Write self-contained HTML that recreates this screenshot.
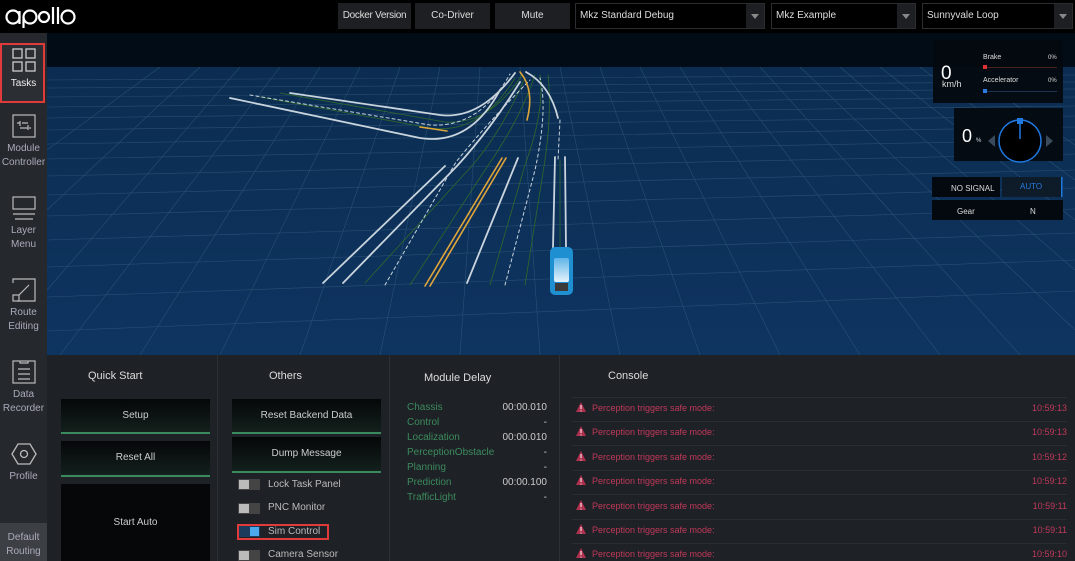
<!DOCTYPE html>
<html><head><meta charset="utf-8"><style>
*{margin:0;padding:0;box-sizing:border-box}
html,body{width:1075px;height:561px;overflow:hidden}
body{background:#1e2126;font-family:"Liberation Sans",sans-serif;position:relative;color:#ddd}
.abs{position:absolute}
#top{left:0;top:0;width:1075px;height:33px;background:#000}
.btn{position:absolute;top:3px;height:26px;background:#1d1f22;color:#ddd;font-size:10px;line-height:26px;text-align:center;white-space:nowrap;overflow:hidden}
.sel{position:absolute;top:3px;height:26px;background:#000;border:1px solid #2b2d30;color:#ddd;font-size:10px;line-height:24px;padding-left:4px;white-space:nowrap}
.sel i{position:absolute;right:0;top:0;width:18px;height:24px;background:#1d1f22}
.sel i:after{content:"";position:absolute;left:5px;top:10px;border:4px solid transparent;border-top:5px solid #888}
#side{left:0;top:33px;width:47px;height:528px;background:#25282c}
.nav{position:absolute;left:0;width:47px;text-align:center;font-size:10px;color:#aab;line-height:14px}
.nav svg{display:block;margin:0 auto 4px}
.panel{position:absolute;top:355px;height:206px;background:#1e2126;border-right:1px solid #2d3035}
.h{position:absolute;font-size:11px;color:#ddd}
.qb{position:absolute;background:linear-gradient(#050708,#13201c);border-bottom:2px solid #3a8a5e;color:#ccc;font-size:10px;text-align:center}
.tg{position:absolute;left:238px;width:22px;height:11px;background:#444}
.tg:before{content:"";position:absolute;left:1px;top:1px;width:10px;height:9px;background:#bbb}
.tl{position:absolute;left:268px;font-size:10px;color:#bbb}
.md{position:absolute;left:407px;width:140px;font-size:10px;color:#3c8b5c}
.md span{position:absolute;right:0;color:#ccc}
.cr{position:absolute;left:572px;width:495px;height:24px;border-bottom:1px solid #2a2d31;font-size:9px;color:#c0395a}
.cr b{font-weight:normal;position:absolute;left:20px;top:5px}
.cr em{font-style:normal;position:absolute;right:0;top:5px}
.cr svg{position:absolute;left:3px;top:3px}
</style></head><body>
<div id="top" class="abs">
<svg class="abs" style="left:5px;top:6px" width="72" height="22"><g fill="none" stroke="#fff" stroke-width="2.2"><circle cx="8" cy="11" r="6.5"/><line x1="14.5" y1="5" x2="14.5" y2="18"/><circle cx="25" cy="11" r="6.5"/><line x1="18.5" y1="11" x2="18.5" y2="22"/><circle cx="39" cy="11" r="5"/><line x1="48" y1="1" x2="48" y2="18"/><line x1="53" y1="1" x2="53" y2="18"/><circle cx="63" cy="11" r="6.5"/></g></svg>
<div class="btn" style="left:338px;width:73px;letter-spacing:-0.3px">Docker Version</div>
<div class="btn" style="left:415px;width:75px">Co-Driver</div>
<div class="btn" style="left:495px;width:75px">Mute</div>
<div class="sel" style="left:575px;width:190px">Mkz Standard Debug<i></i></div>
<div class="sel" style="left:771px;width:145px">Mkz Example<i></i></div>
<div class="sel" style="left:922px;width:151px">Sunnyvale Loop<i></i></div>
</div>
<div id="side" class="abs"></div>
<div class="abs" style="left:0;top:43px;width:45px;height:60px;border:2px solid #e03a3a;background:#2b2e33"></div>
<div class="nav" style="top:47px"><svg width="26" height="26" fill="none" stroke="#ccc" stroke-width="1.3"><rect x="2" y="2" width="9" height="9"/><rect x="15" y="2" width="9" height="9"/><rect x="2" y="15" width="9" height="9"/><rect x="15" y="15" width="9" height="9"/></svg><span style="color:#eee">Tasks</span></div>
<div class="nav" style="top:114px"><svg width="24" height="24" fill="none" stroke="#bbb" stroke-width="1.2"><rect x="1" y="1" width="22" height="22"/><path d="M8 7v5M5 9h3M10 9h6M16 16v-5M8 14h8M17 14h2"/></svg>Module<br>Controller</div>
<div class="nav" style="top:196px"><svg width="24" height="24" fill="none" stroke="#bbb" stroke-width="1.2"><rect x="1" y="1" width="22" height="12"/><path d="M1 18h22M3 23h18"/></svg>Layer<br>Menu</div>
<div class="nav" style="top:278px"><svg width="24" height="24" fill="none" stroke="#bbb" stroke-width="1.2"><path d="M1 5V1h22v22H5"/><rect x="1" y="17" width="6" height="6"/><path d="M7 17l10-10"/></svg>Route<br>Editing</div>
<div class="nav" style="top:360px"><svg width="24" height="24" fill="none" stroke="#bbb" stroke-width="1.2"><rect x="1" y="1" width="22" height="22"/><path d="M8 1v2h8V1M6 9h12M6 14h12M6 19h12"/></svg>Data<br>Recorder</div>
<div class="nav" style="top:442px"><svg width="26" height="24" fill="none" stroke="#bbb" stroke-width="1.3"><path d="M7 2h12l6 10-6 10H7L1 12z"/><circle cx="13" cy="12" r="3.5"/></svg>Profile</div>
<div class="nav" style="top:523px;height:38px;background:#3c3f44;padding-top:8px">Default<br>Routing</div>

<svg class="abs" style="left:47px;top:33px" width="1028" height="322" viewBox="47 33 1028 322">
<defs><linearGradient id="bg" x1="0" y1="0" x2="0" y2="1"><stop offset="0" stop-color="#0b2c4f"/><stop offset="1" stop-color="#0e3460"/></linearGradient>
<linearGradient id="cw" x1="0" y1="0" x2="0" y2="1"><stop offset="0" stop-color="#5fb4e8"/><stop offset="1" stop-color="#e6f4fb"/></linearGradient></defs>
<rect x="47" y="33" width="1028" height="322" fill="url(#bg)"/>
<g stroke="#4a7595" stroke-width="0.6" opacity="0.45" fill="none">
<path d="M47 80L1075 75M47 88L1075 82M47 97L1075 89M47 107L1075 97M47 118L1075 106M47 130L1075 116M47 144L1075 127M47 159L1075 140M47 176L1075 154M47 195L1075 170M47 216L1075 188M47 240L1075 209M47 267L1075 233M47 297L1075 260M47 331L1075 291"/>
<path d="M60 355L280 67M140 355L320 67M220 355L360 67M300 355L400 67M380 355L440 67M460 355L480 67M540 355L520 67M620 355L560 67M700 355L600 67M780 355L640 67M860 355L680 67M940 355L720 67M1020 355L760 67M1075 330L800 67M1075 270L840 67M1075 220L880 67M1075 180L920 67M1075 145L960 67M47 290L240 67M47 210L200 67M47 150L160 67"/>
</g>
<rect x="47" y="33" width="1028" height="34" fill="#020c17"/>
<g fill="none" stroke-linecap="round">
<g stroke="#2f6a2a" stroke-width="0.8"><path d="M260 97L430 128Q480 135 515 78"/><path d="M280 93L445 122Q490 125 522 75"/><path d="M365 283L470 168Q500 135 525 78"/><path d="M410 285L485 170Q520 120 535 75"/><path d="M490 285L525 165Q545 110 540 75"/><path d="M525 285L545 160Q552 110 548 75"/><path d="M560 250L560 160"/></g>
<g stroke="#c9d4dd" stroke-width="1.8"><path d="M230 98L420 138Q470 146 500 90"/><path d="M290 93L440 115Q480 120 515 73"/><path d="M323 283L445 166"/><path d="M343 283L457 166Q490 130 520 82"/><path d="M467 283L518 158"/><path d="M526 72Q550 85 558 118"/><path d="M555 157L553 248"/><path d="M565 157L566 248"/></g>
<g stroke="#c9d4dd" stroke-width="1" stroke-dasharray="3 3"><path d="M385 285L456 162Q490 120 530 80"/><path d="M505 285L535 170Q548 110 540 78"/><path d="M250 95L430 125Q480 128 510 74"/><path d="M560 120L558 160"/></g>
<g stroke="#e0a53a" stroke-width="1.6"><path d="M425 286L502 158"/><path d="M430 286L506 158"/><path d="M520 72Q535 90 527 120"/><path d="M420 127L447 131"/></g>
</g>
<rect x="550" y="247" width="23" height="48" rx="5" fill="#1e8fd0"/><rect x="554" y="258" width="15" height="24" rx="2" fill="url(#cw)"/><rect x="555" y="283" width="13" height="8" fill="#3b3a3a"/>
<rect x="933" y="40" width="130" height="63" fill="#04090f" opacity="0.95"/>
<text x="941" y="79" fill="#fff" font-size="19" font-family="Liberation Sans">0</text><text x="942" y="87" fill="#ddd" font-size="9" font-family="Liberation Sans">km/h</text>
<text x="983" y="59" fill="#ddd" font-size="7" font-family="Liberation Sans">Brake</text><text x="1048" y="59" fill="#ddd" font-size="6" font-family="Liberation Sans">0%</text>
<rect x="983" y="67" width="74" height="1" fill="#4a2020"/><rect x="983" y="65" width="4" height="4" fill="#d33"/>
<text x="983" y="82" fill="#ddd" font-size="7" font-family="Liberation Sans">Accelerator</text><text x="1048" y="82" fill="#ddd" font-size="6" font-family="Liberation Sans">0%</text>
<rect x="983" y="91" width="74" height="1" fill="#1d3550"/><rect x="983" y="89" width="4" height="4" fill="#2a7ae0"/>
<rect x="954" y="108" width="109" height="53" fill="#04090f" opacity="0.95"/>
<text x="962" y="142" fill="#fff" font-size="18" font-family="Liberation Sans">0</text><text x="976" y="142" fill="#ddd" font-size="6" font-family="Liberation Sans">%</text>
<path d="M995 135l-7 6 7 6z" fill="#3a4a5a"/><path d="M1046 135l7 6-7 6z" fill="#3a4a5a"/>
<circle cx="1020" cy="141" r="21" fill="#000" stroke="#1f78e0" stroke-width="1.5"/><rect x="1017" y="118" width="6" height="6" fill="#1f78e0"/><line x1="1020" y1="122" x2="1020" y2="139" stroke="#1f78e0" stroke-width="1.5"/>
<rect x="932" y="177" width="68" height="20" fill="#04090f"/><text x="951" y="191" fill="#ddd" font-size="8" font-family="Liberation Sans">NO SIGNAL</text>
<rect x="1002" y="177" width="60" height="20" fill="#0e1b28"/><rect x="1061" y="177" width="1.5" height="20" fill="#1f78e0"/><text x="1020" y="189" fill="#2a7ae0" font-size="8" font-family="Liberation Sans">AUTO</text>
<rect x="932" y="200" width="131" height="20" fill="#04090f"/><text x="957" y="214" fill="#ddd" font-size="8" font-family="Liberation Sans">Gear</text><text x="1030" y="214" fill="#ddd" font-size="8" font-family="Liberation Sans">N</text>
</svg>

<div class="panel" style="left:47px;width:171px"></div>
<div class="panel" style="left:218px;width:172px"></div>
<div class="panel" style="left:390px;width:170px"></div>
<div class="panel" style="left:560px;width:515px;border:none"></div>
<div class="h" style="left:88px;top:370px">Quick Start</div>
<div class="qb" style="left:61px;top:399px;width:149px;height:35px;line-height:33px">Setup</div>
<div class="qb" style="left:61px;top:441px;width:149px;height:36px;line-height:34px">Reset All</div>
<div class="abs" style="left:61px;top:484px;width:149px;height:77px;background:#050708;color:#ccc;font-size:10px;text-align:center;line-height:78px">Start Auto</div>
<div class="h" style="left:269px;top:370px">Others</div>
<div class="qb" style="left:232px;top:399px;width:149px;height:35px;line-height:33px">Reset Backend Data</div>
<div class="qb" style="left:232px;top:437px;width:149px;height:36px;line-height:34px">Dump Message</div>
<div class="tg" style="top:479px"></div><div class="tl" style="top:479px">Lock Task Panel</div>
<div class="tg" style="top:503px"></div><div class="tl" style="top:502px">PNC Monitor</div>
<div class="abs" style="left:238px;top:526px;width:22px;height:11px;background:#1b3b5c"><div class="abs" style="left:12px;top:1px;width:9px;height:9px;background:#4aa8ec"></div></div><div class="tl" style="top:526px">Sim Control</div>
<div class="abs" style="left:237px;top:524px;width:92px;height:16px;border:2px solid #e03a3a"></div>
<div class="tg" style="top:550px"></div><div class="tl" style="top:549px">Camera Sensor</div>
<div class="h" style="left:424px;top:372px">Module Delay</div>
<div class="md" style="top:402px">Chassis<span>00:00.010</span></div>
<div class="md" style="top:417px">Control<span>-</span></div>
<div class="md" style="top:432px">Localization<span>00:00.010</span></div>
<div class="md" style="top:447px">PerceptionObstacle<span>-</span></div>
<div class="md" style="top:462px">Planning<span>-</span></div>
<div class="md" style="top:477px">Prediction<span>00:00.100</span></div>
<div class="md" style="top:492px">TrafficLight<span>-</span></div>
<div class="h" style="left:608px;top:370px">Console</div>
<div class="abs" style="left:572px;top:397px;width:495px;height:1px;background:#2a2d31"></div>
<div class="cr" style="top:398px"><svg width="12" height="12"><path d="M6 1L11 11H1z" fill="#b03050"/><path d="M6 4v4M6 9.5v1" stroke="#fff" stroke-width="1"/></svg><b>Perception triggers safe mode:</b><em>10:59:13</em></div>
<div class="cr" style="top:422px"><svg width="12" height="12"><path d="M6 1L11 11H1z" fill="#b03050"/><path d="M6 4v4M6 9.5v1" stroke="#fff" stroke-width="1"/></svg><b>Perception triggers safe mode:</b><em>10:59:13</em></div>
<div class="cr" style="top:447px"><svg width="12" height="12"><path d="M6 1L11 11H1z" fill="#b03050"/><path d="M6 4v4M6 9.5v1" stroke="#fff" stroke-width="1"/></svg><b>Perception triggers safe mode:</b><em>10:59:12</em></div>
<div class="cr" style="top:471px"><svg width="12" height="12"><path d="M6 1L11 11H1z" fill="#b03050"/><path d="M6 4v4M6 9.5v1" stroke="#fff" stroke-width="1"/></svg><b>Perception triggers safe mode:</b><em>10:59:12</em></div>
<div class="cr" style="top:496px"><svg width="12" height="12"><path d="M6 1L11 11H1z" fill="#b03050"/><path d="M6 4v4M6 9.5v1" stroke="#fff" stroke-width="1"/></svg><b>Perception triggers safe mode:</b><em>10:59:11</em></div>
<div class="cr" style="top:520px"><svg width="12" height="12"><path d="M6 1L11 11H1z" fill="#b03050"/><path d="M6 4v4M6 9.5v1" stroke="#fff" stroke-width="1"/></svg><b>Perception triggers safe mode:</b><em>10:59:11</em></div>
<div class="cr" style="top:544px"><svg width="12" height="12"><path d="M6 1L11 11H1z" fill="#b03050"/><path d="M6 4v4M6 9.5v1" stroke="#fff" stroke-width="1"/></svg><b>Perception triggers safe mode:</b><em>10:59:10</em></div>
</body></html>
